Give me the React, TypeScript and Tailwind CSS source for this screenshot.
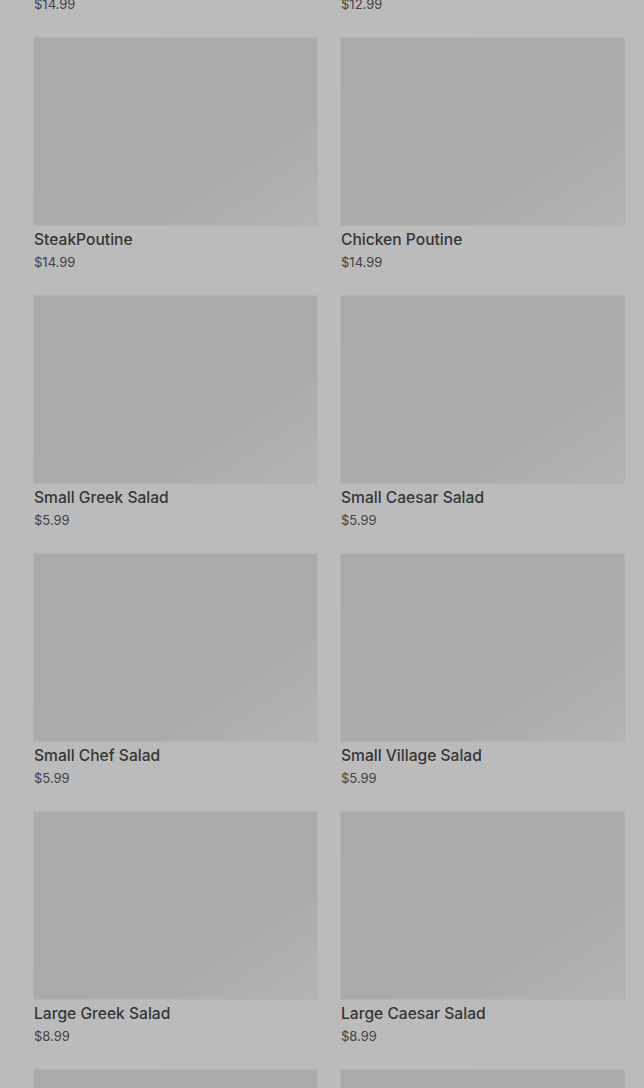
import React from 'react';

type Item = { name: string; price: string };

const items: Item[] = [
  { name: 'Classic Poutine', price: '$14.99' },
  { name: 'Veggie Poutine', price: '$12.99' },
  { name: 'SteakPoutine', price: '$14.99' },
  { name: 'Chicken Poutine', price: '$14.99' },
  { name: 'Small Greek Salad', price: '$5.99' },
  { name: 'Small Caesar Salad', price: '$5.99' },
  { name: 'Small Chef Salad', price: '$5.99' },
  { name: 'Small Village Salad', price: '$5.99' },
  { name: 'Large Greek Salad', price: '$8.99' },
  { name: 'Large Caesar Salad', price: '$8.99' },
  { name: 'Large Chef Salad', price: '$8.99' },
  { name: 'Large Village Salad', price: '$8.99' },
];

const MenuCard: React.FC<{ item: Item }> = ({ item }) => (
  <div className="flex flex-col">
    <div className="h-[187px] bg-gradient-to-br from-[#aaaaaa] via-[#ababab] via-70% to-[#b4b4b4] shadow-[0_0_0_1px_#b3b3b3]" />
    <p className="mt-[3px] text-[15.6px] leading-[24px] font-medium text-[#363636]">
      {item.name}
    </p>
    <p className="text-[13px] leading-[20px] text-[#444444]">{item.price}</p>
  </div>
);

export default function App() {
  return (
    <div
      className="h-[1088px] overflow-hidden bg-[#bbbbbb] pl-[34px] pr-5"
      style={{ fontFamily: 'Inter, "Noto Sans", sans-serif' }}
    >
      <div className="-mt-[220px] grid grid-cols-2 gap-x-6 gap-y-6">
        {items.map((item, i) => (
          <MenuCard key={i} item={item} />
        ))}
      </div>
    </div>
  );
}
